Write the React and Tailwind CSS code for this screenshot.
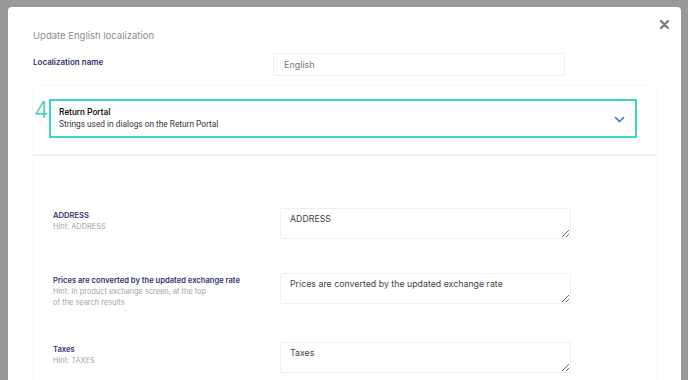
import React from "react";

const rows = [
  { label: "ADDRESS", hint: ["Hint: ADDRESS"], value: "ADDRESS" },
  {
    label: "Prices are converted by the updated exchange rate",
    hint: ["Hint: In product exchange screen, at the top", "of the search results"],
    value: "Prices are converted by the updated exchange rate",
  },
  { label: "Taxes", hint: ["Hint: TAXES"], value: "Taxes" },
];

export default function App() {
  return (
    <div className="w-[688px] h-[380px] bg-[#999999] overflow-hidden pt-[7px] pl-[8px] font-['Inter',sans-serif]">
      <div className="relative w-[673px] h-[400px] bg-white rounded-t-[4px] px-[25px] pt-[22px]">
        <button className="absolute right-[10px] top-[10px] w-[14px] h-[14px] flex items-center justify-center">
          <svg width="9" height="9" viewBox="0 0 9 9">
            <path d="M1 1 L8 8 M8 1 L1 8" stroke="#7a7a7a" strokeWidth="2.2" strokeLinecap="round" />
          </svg>
        </button>
        <div className="text-[9.5px] leading-[14px] text-[#8c8c8c]">Update English localization</div>
        <div className="flex mt-[10px]">
          <div className="w-[240px] pt-[3px] text-[8px] leading-[12px] font-semibold text-[#2f3170]">Localization name</div>
          <div className="w-[292px] h-[23px] border border-[#efefef] rounded-[2px] flex items-center pl-[10px] text-[9px] text-[#777]">
            English
          </div>
        </div>
        <div className="mt-[10px] w-[623px] bg-white shadow-[0_0_3px_rgba(0,0,0,0.06)]">
          <div className="flex items-start pl-[1px] pr-[19px] pt-[13px] pb-[16px]">
            <div className="w-[15px] text-[23px] leading-[20px] font-light text-[#3ccdb7] mt-[1px]">4</div>
            <div className="flex-1 h-[39px] border-2 border-[#3fd4c0] flex items-center pl-[8px] pr-[10px] font-['Roboto',sans-serif]">
              <div className="flex-1">
                <div className="text-[8.7px] leading-[12px] font-medium text-[#111]">Return Portal</div>
                <div className="text-[8.3px] leading-[13px] text-[#333]">Strings used in dialogs on the Return Portal</div>
              </div>
              <svg width="11" height="7" viewBox="0 0 11 7" className="mt-[2px]">
                <path d="M1 1 L5.5 5.5 L10 1" fill="none" stroke="#4a6fe0" strokeWidth="1.6" />
              </svg>
            </div>
          </div>
          <div className="h-[2px] bg-[#f1f1f3]" />
          <div className="pl-[20px] pt-[52px] flex flex-col gap-[34px] pb-[40px]">
            {rows.map((r) => (
              <div key={r.label} className="flex items-start">
                <div className="w-[227px] pt-[2px]">
                  <div className="text-[7.6px] leading-[11px] font-semibold text-[#2f3170]">{r.label}</div>
                  {r.hint.map((h) => (
                    <div key={h} className="text-[7.4px] leading-[11px] text-[#a3a3a3]">{h}</div>
                  ))}
                </div>
                <textarea
                  readOnly
                  defaultValue={r.value}
                  className="w-[291px] h-[31px] border border-[#efefef] rounded-[2px] px-[9px] pt-[3px] text-[8.8px] leading-[14px] text-[#444] outline-none resize-y"
                />
              </div>
            ))}
          </div>
        </div>
      </div>
    </div>
  );
}
